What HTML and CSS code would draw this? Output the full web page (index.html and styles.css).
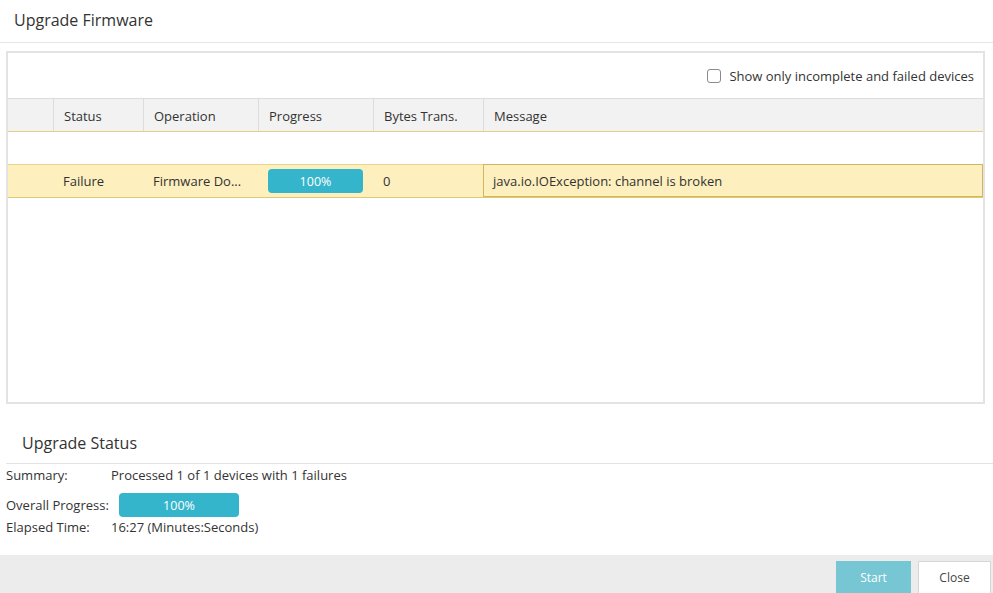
FILE: index.html
```html
<!DOCTYPE html>
<html>
<head>
<meta charset="utf-8">
<link rel="stylesheet" href="styles.css">
</head>
<body>
<div class="dialog">
  <div class="title">Upgrade Firmware</div>
  <div class="grid-panel">
    <div class="toolbar">
      <label class="chk"><span class="box"></span>Show only incomplete and failed devices</label>
    </div>
    <div class="row head">
      <div class="cell"></div>
      <div class="cell">Status</div>
      <div class="cell">Operation</div>
      <div class="cell">Progress</div>
      <div class="cell">Bytes Trans.</div>
      <div class="cell">Message</div>
    </div>
    <div class="row empty"></div>
    <div class="row data">
      <div class="cell"></div>
      <div class="cell">Failure</div>
      <div class="cell">Firmware Do...</div>
      <div class="cell"><div class="bar small">100%</div></div>
      <div class="cell">0</div>
      <div class="cell sel">java.io.IOException: channel is broken</div>
    </div>
  </div>
  <div class="status-title">Upgrade Status</div>
  <div class="status">
    <div class="srow"><span class="lbl">Summary:</span><span>Processed 1 of 1 devices with 1 failures</span></div>
    <div class="srow prog"><span class="lbl">Overall Progress:</span><div class="bar big">100%</div></div>
    <div class="srow et"><span class="lbl">Elapsed Time:</span><span>16:27 (Minutes:Seconds)</span></div>
  </div>
  <div class="footer">
    <button class="btn start">Start</button>
    <button class="btn close">Close</button>
  </div>
</div>
</body>
</html>
```
FILE: styles.css
```css
* { box-sizing: border-box; }
html, body { margin: 0; padding: 0; background: #fff; }
body {
  font-family: "Open Sans", "Noto Sans", sans-serif;
  font-size: 13px;
  color: #333;
  width: 993px;
  height: 593px;
  overflow: hidden;
}
.dialog { display: flex; flex-direction: column; height: 593px; }
.title {
  height: 43px;
  padding: 9px 0 0 14px;
  font-size: 16px;
  color: #333;
  border-bottom: 1px solid #e6e6e6;
}
.grid-panel {
  margin: 8px 8px 0 6px;
  height: 353px;
  border: 2px solid #e3e3e3;
  display: flex;
  flex-direction: column;
}
.toolbar {
  height: 45px;
  display: flex;
  justify-content: flex-end;
  align-items: center;
  padding: 0 9px 0 0;
}
.chk { display: flex; align-items: center; color: #333; }
.box {
  width: 14px; height: 14px;
  border: 1px solid #8a8a8a;
  border-radius: 3px;
  margin-right: 8px;
  background: #fff;
}
.row {
  display: grid;
  grid-template-columns: 45px 90px 115px 115px 110px 1fr;
}
.row.head {
  height: 34px;
  background: #f2f2f2;
  border-top: 1px solid #dcdcdc;
  border-bottom: 1px solid #e6cf7e;
}
.row.head .cell {
  border-left: 1px solid #dcdcdc;
  display: flex; align-items: center;
  padding-left: 10px;
  padding-top: 2px;
}
.row.head .cell:first-child { border-left: none; }
.row.empty { height: 32px; }
.row.data {
  height: 34px;
  background: #fdefbe;
  border-top: 1px solid #e8d487;
  border-bottom: 1px solid #e0c870;
}
.row.data .cell {
  display: flex; align-items: center;
  padding-left: 10px;
}
.row.data .cell.sel {
  border: 1px solid #d2b75a;
  margin: -1px 0 0 0;
  padding-left: 9px;
  height: 33px;
}
.bar {
  background: #35b5cb;
  color: #fff;
  border-radius: 4px;
  display: flex; align-items: center; justify-content: center;
  font-size: 12.5px;
}
.bar.small { width: 95px; height: 24px; }
.bar.big { width: 120px; height: 24px; }
.status-title {
  margin-top: 27px;
  font-size: 16px;
  height: 33px;
  padding-top: 1px;
  border-bottom: 1px solid #e3e3e3;
  margin-left: 6px;
  padding-left: 16px;
}
.status { padding-left: 6px; }
.srow { display: flex; align-items: center; }
.srow .lbl { width: 105px; }
.srow:first-child { height: 22px; }
.srow.prog { margin-top: 7px; height: 24px; }
.srow.prog .lbl { width: 113px; }
.srow.et { height: 20px; }
.footer {
  margin-top: auto;
  height: 38px;
  background: #ececec;
  display: flex;
  justify-content: flex-end;
  align-items: flex-end;
  padding-right: 2px;
}
.btn {
  font-family: "Open Sans", "Noto Sans", sans-serif;
  font-size: 12px;
  height: 32px;
  border-radius: 0;
  cursor: pointer;
}
.btn.start {
  width: 75px;
  background: #76c6d4;
  color: #fff;
  border: none;
  margin-right: 7px;
}
.btn.close {
  width: 73px;
  background: #fff;
  color: #444;
  border: 1px solid #d6d6d6;
  border-bottom: none;
}
```
